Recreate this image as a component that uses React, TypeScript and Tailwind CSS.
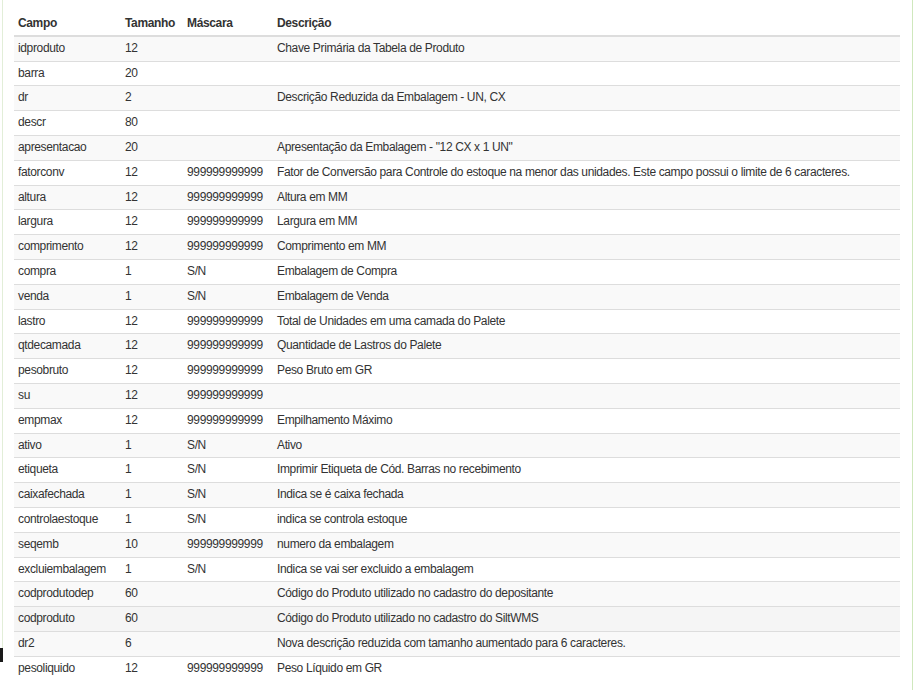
import React from 'react';

type Campo = { nome: string; tamanho: string; mascara: string; descricao: string };

const MASK = '999999999999';

const CAMPOS: Campo[] = [
  { nome: 'idproduto', tamanho: '12', mascara: '', descricao: 'Chave Primária da Tabela de Produto' },
  { nome: 'barra', tamanho: '20', mascara: '', descricao: '' },
  { nome: 'dr', tamanho: '2', mascara: '', descricao: 'Descrição Reduzida da Embalagem - UN, CX' },
  { nome: 'descr', tamanho: '80', mascara: '', descricao: '' },
  { nome: 'apresentacao', tamanho: '20', mascara: '', descricao: 'Apresentação da Embalagem - "12 CX x 1 UN"' },
  {
    nome: 'fatorconv',
    tamanho: '12',
    mascara: MASK,
    descricao: 'Fator de Conversão para Controle do estoque na menor das unidades. Este campo possui o limite de 6 caracteres.',
  },
  { nome: 'altura', tamanho: '12', mascara: MASK, descricao: 'Altura em MM' },
  { nome: 'largura', tamanho: '12', mascara: MASK, descricao: 'Largura em MM' },
  { nome: 'comprimento', tamanho: '12', mascara: MASK, descricao: 'Comprimento em MM' },
  { nome: 'compra', tamanho: '1', mascara: 'S/N', descricao: 'Embalagem de Compra' },
  { nome: 'venda', tamanho: '1', mascara: 'S/N', descricao: 'Embalagem de Venda' },
  { nome: 'lastro', tamanho: '12', mascara: MASK, descricao: 'Total de Unidades em uma camada do Palete' },
  { nome: 'qtdecamada', tamanho: '12', mascara: MASK, descricao: 'Quantidade de Lastros do Palete' },
  { nome: 'pesobruto', tamanho: '12', mascara: MASK, descricao: 'Peso Bruto em GR' },
  { nome: 'su', tamanho: '12', mascara: MASK, descricao: '' },
  { nome: 'empmax', tamanho: '12', mascara: MASK, descricao: 'Empilhamento Máximo' },
  { nome: 'ativo', tamanho: '1', mascara: 'S/N', descricao: 'Ativo' },
  { nome: 'etiqueta', tamanho: '1', mascara: 'S/N', descricao: 'Imprimir Etiqueta de Cód. Barras no recebimento' },
  { nome: 'caixafechada', tamanho: '1', mascara: 'S/N', descricao: 'Indica se é caixa fechada' },
  { nome: 'controlaestoque', tamanho: '1', mascara: 'S/N', descricao: 'indica se controla estoque' },
  { nome: 'seqemb', tamanho: '10', mascara: MASK, descricao: 'numero da embalagem' },
  { nome: 'excluiembalagem', tamanho: '1', mascara: 'S/N', descricao: 'Indica se vai ser excluido a embalagem' },
  { nome: 'codprodutodep', tamanho: '60', mascara: '', descricao: 'Código do Produto utilizado no cadastro do depositante' },
  { nome: 'codproduto', tamanho: '60', mascara: '', descricao: 'Código do Produto utilizado no cadastro do SiltWMS' },
  { nome: 'dr2', tamanho: '6', mascara: '', descricao: 'Nova descrição reduzida com tamanho aumentado para 6 caracteres.' },
  { nome: 'pesoliquido', tamanho: '12', mascara: MASK, descricao: 'Peso Líquido em GR' },
];

// row under the mouse pointer in the screenshot
const HOVER_ROW = 'codproduto';

export default function App() {
  return (
    <div
      className="relative min-h-[690px] w-[911px] ml-[2px] border-l border-r border-l-[#e2eed8] border-r-[#cfe8bd] bg-white pl-[11px] pr-[12px] pt-[12px] text-[12px] tracking-[-0.36px] text-[#333333]"
      style={{ fontFamily: '"Liberation Sans", Arial, sans-serif' }}
    >
      <table className="w-[886px] border-collapse">
        <thead>
          <tr className="text-left">
            <th className="w-[107px] border-b-2 border-[#dddddd] px-[4px] pt-[4px] pb-[3px] font-bold leading-[15.8px]">Campo</th>
            <th className="w-[62px] border-b-2 border-[#dddddd] px-[4px] pt-[4px] pb-[3px] font-bold leading-[15.8px]">Tamanho</th>
            <th className="w-[90px] border-b-2 border-[#dddddd] px-[4px] pt-[4px] pb-[3px] font-bold leading-[15.8px]">Máscara</th>
            <th className="border-b-2 border-[#dddddd] px-[4px] pt-[4px] pb-[3px] font-bold leading-[15.8px]">Descrição</th>
          </tr>
        </thead>
        <tbody>
          {CAMPOS.map((c, i) => {
            const bg = c.nome === HOVER_ROW ? 'bg-[#f5f5f5]' : i % 2 === 0 ? 'bg-[#f9f9f9]' : 'bg-white';
            const cell = `${i === 0 ? '' : 'border-t border-[#dddddd]'} px-[4px] py-[4px] leading-[15.8px] whitespace-nowrap`;
            return (
              <tr key={c.nome} className={bg}>
                <td className={cell}>{c.nome}</td>
                <td className={cell}>{c.tamanho}</td>
                <td className={cell}>{c.mascara}</td>
                <td className={cell}>{c.descricao}</td>
              </tr>
            );
          })}
        </tbody>
      </table>

      {/* stray dark mark on the left edge; the green rule stops under it */}
      <div className="absolute left-[-3px] top-[648px] h-[14px] w-[3px] bg-[#1a1a1a]" />
      <div className="absolute left-[-1px] top-[662px] bottom-0 w-[1px] bg-white" />
    </div>
  );
}
